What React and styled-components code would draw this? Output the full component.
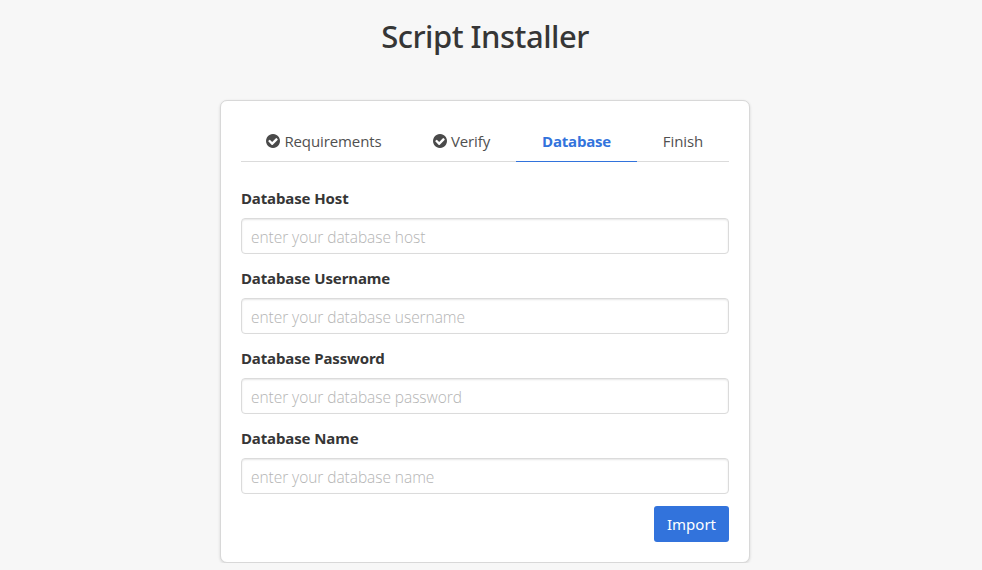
import React from "react";
import styled, { createGlobalStyle } from "styled-components";

const GlobalStyle = createGlobalStyle`
  *, *::before, *::after { box-sizing: border-box; }
  html { background: #f7f7f7; overflow: hidden; }
  body { margin: 0; background: #f7f7f7; color: #4a4a4a; font: 400 16px/24px "Noto Sans", sans-serif; }
`;

const Page = styled.main`
  width: 530px;
  margin-left: 220px;
`;

const Title = styled.h1`
  margin: 0 0 46px;
  padding-top: 18px;
  font: 500 31px/36px "Noto Sans", sans-serif;
  letter-spacing: -0.5px;
  color: #363636;
  text-align: center;
`;

const Card = styled.section`
  height: 463px;
  padding: 20px;
  background: #fff;
  border: 1px solid #d8d8d8;
  border-radius: 7px;
  box-shadow: 0 1px 3px rgba(10, 10, 10, 0.14);
`;

const Tabs = styled.nav`
  display: flex;
  height: 41px;
  border-bottom: 1px solid #dbdbdb;
`;

const Tab = styled.div`
  display: flex;
  align-items: center;
  justify-content: center;
  gap: 4px;
  width: ${(p) => p.$width}px;
  height: 41px;
  color: ${(p) => (p.$active ? "#3273dc" : "#505050")};
  font-family: "Open Sans", sans-serif;
  font-size: 15px;
  font-weight: ${(p) => (p.$active ? 700 : 400)};
  letter-spacing: ${(p) => (p.$active ? "-0.2px" : "-0.1px")};
  border-bottom: 1px solid ${(p) => (p.$active ? "#3273dc" : "transparent")};
`;

const CheckIcon = styled.svg`
  width: 14px;
  height: 14px;
  flex: none;
  fill: #4a4a4a;
`;

const Text = styled.span`
  display: inline-block;
  white-space: nowrap;
`;

const Form = styled.form`
  padding-top: 24px;
`;

const Field = styled.div`
  margin-bottom: 12px;
`;

const Label = styled.label`
  display: block;
  margin-bottom: 8px;
  color: #363636;
  font-size: 15px;
  font-weight: 700;
  letter-spacing: -0.12px;
`;

const Input = styled.input`
  display: block;
  width: 100%;
  height: 36px;
  padding: 2px 9px 0;
  border: 1px solid #dbdbdb;
  border-radius: 4px;
  box-shadow: inset 0 1px 2px rgba(10, 10, 10, 0.1);
  font: 300 15.5px/24px "Open Sans", sans-serif;
  letter-spacing: -0.05px;
  &::placeholder { color: #b4b4b4; opacity: 1; }
`;

const Actions = styled.div`
  display: flex;
  justify-content: flex-end;
`;

const Button = styled.button`
  width: 75px;
  height: 36px;
  padding: 0;
  border: 0;
  border-radius: 3px;
  background: #3273dc;
  color: #fff;
  font: 400 15px/24px "Noto Sans", sans-serif;
`;

const tabs = [
  { name: "Requirements", width: 166, done: true },
  { name: "Verify", width: 109, done: true },
  { name: "Database", width: 121, active: true },
  { name: "Finish", width: 92 },
];

const fields = ["Host", "Username", "Password", "Name"];

function Check() {
  return (
    <CheckIcon viewBox="0 0 1536 1536" aria-hidden="true">
      <path d="M1284 606q0-28-18-46l-91-90q-19-19-45-19t-45 19l-408 407-226-226q-19-19-45-19t-45 19l-91 90q-18 18-18 46 0 27 18 45l362 362q19 19 45 19 27 0 46-19l543-543q18-18 18-45zm252 162q0 209-103 385.5t-279.5 279.5-385.5 103-385.5-103-279.5-279.5-103-385.5 103-385.5 279.5-279.5 385.5-103 385.5 103 279.5 279.5 103 385.5z" />
    </CheckIcon>
  );
}

export default function App() {
  return (
    <>
      <GlobalStyle />
      <Page>
        <Title><Text>Script Installer</Text></Title>
        <Card>
          <Tabs>
            {tabs.map((t) => (
              <Tab key={t.name} $width={t.width} $active={t.active}>
                {t.done && <Check />}
                <Text>{t.name}</Text>
              </Tab>
            ))}
          </Tabs>
          <Form>
            {fields.map((f) => (
              <Field key={f}>
                <Label htmlFor={f}><Text>Database {f}</Text></Label>
                <Input id={f} placeholder={`enter your database ${f.toLowerCase()}`} />
              </Field>
            ))}
            <Actions><Button type="button">Import</Button></Actions>
          </Form>
        </Card>
      </Page>
    </>
  );
}
